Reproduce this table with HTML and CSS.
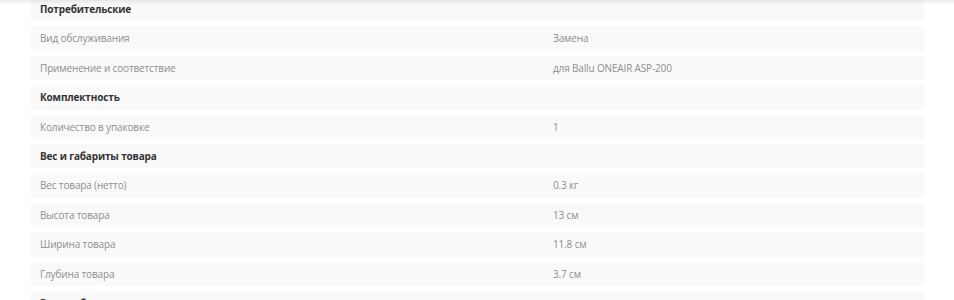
FILE: index.html
```html
<!DOCTYPE html>
<html lang="ru">
<head>
<meta charset="utf-8">
<link rel="stylesheet" href="styles.css">
</head>
<body>
<div class="topshade"></div>
<div class="specs">
  <div class="row head"><span>Потребительские</span><span></span></div>
  <div class="row"><span>Вид обслуживания</span><span>Замена</span></div>
  <div class="row"><span>Применение и соответствие</span><span>для Ballu ONEAIR ASP-200</span></div>
  <div class="row head"><span>Комплектность</span><span></span></div>
  <div class="row"><span>Количество в упаковке</span><span>1</span></div>
  <div class="row head"><span>Вес и габариты товара</span><span></span></div>
  <div class="row"><span>Вес товара (нетто)</span><span>0.3 кг</span></div>
  <div class="row"><span>Высота товара</span><span>13 см</span></div>
  <div class="row"><span>Ширина товара</span><span>11.8 см</span></div>
  <div class="row"><span>Глубина товара</span><span>3.7 см</span></div>
  <div class="row head"><span>Вес и габариты упаковки</span><span></span></div>
</div>
</body>
</html>
```
FILE: styles.css
```css
html, body {
  margin: 0;
  padding: 0;
  background: #ffffff;
  overflow: hidden;
}
body {
  font-family: "Open Sans", "Noto Sans", sans-serif;
  font-size: 10px;
  letter-spacing: -0.15px;
}
.topshade {
  position: fixed;
  top: 0;
  left: 0;
  right: 0;
  height: 5px;
  background: linear-gradient(to bottom, rgba(0,0,0,0.07), rgba(0,0,0,0));
  z-index: 2;
}
.specs {
  margin: -3px 30px 0 31px;
  width: 893px;
  display: flex;
  flex-direction: column;
  gap: 5px;
}
.row {
  display: grid;
  grid-template-columns: 513px 1fr;
  padding: 5px 9px;
  line-height: 14.4px;
  background: #f9f9f9;
  border-radius: 2px;
  color: #8e8e8e;
}
.row.head {
  color: #333333;
  font-weight: 700;
}
```
